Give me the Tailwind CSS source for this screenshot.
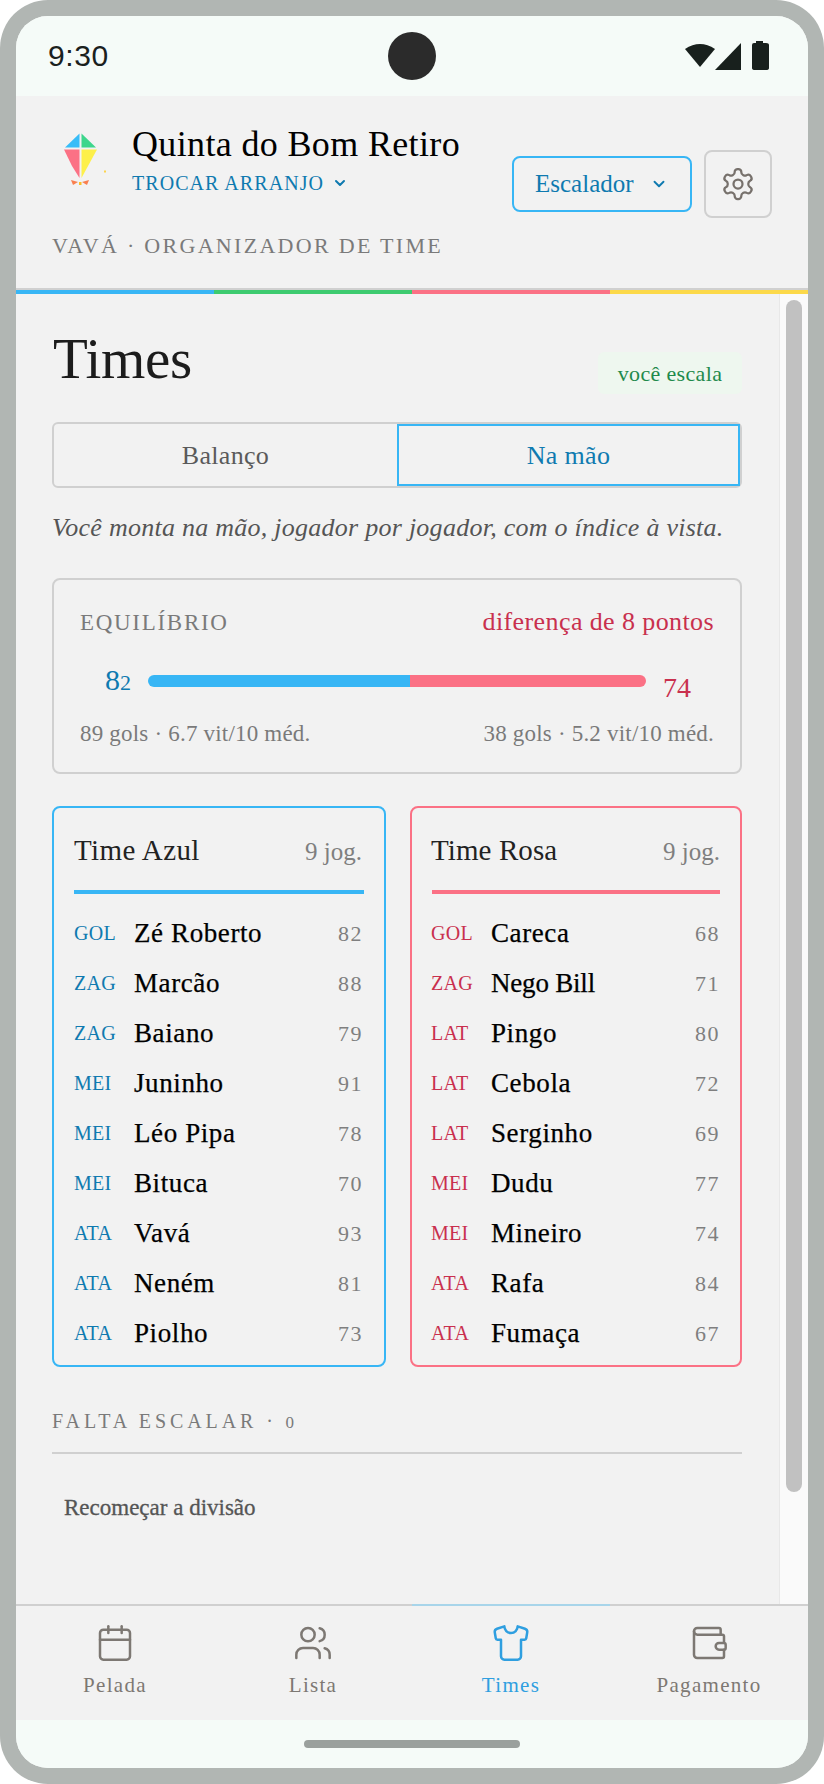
<!DOCTYPE html>
<html lang="pt">
<head>
  <meta charset="UTF-8" />
  <meta name="viewport" content="width=device-width, initial-scale=1.0" />
  <title>Times</title>
  <script src="https://cdn.jsdelivr.net/npm/@tailwindcss/browser@4"></script>
</head>
<body class="bg-white">
  <div class="w-[824px] h-[1784px] p-4 bg-[#b1b6b3] rounded-[48px] font-['Liberation_Serif',serif]">
    <div class="h-[1752px] flex flex-col overflow-hidden rounded-[32px] bg-[#f2f2f2]">

      <!-- Status bar -->
      <div class="h-20 shrink-0 bg-[#f5fbf8] flex items-center justify-between pl-8 pr-[39px] relative">
        <span class="font-['Liberation_Sans',sans-serif] text-[30px] leading-8 tracking-[0.6px] text-[#1a211e]">9:30</span>
        <div class="absolute left-[372px] top-4 w-12 h-12 rounded-full bg-[#2b2b2b]"></div>
        <svg class="w-[84px] h-[30px]" viewBox="0 0 84 30" fill="#18201d">
          <path d="M0 7 Q15 -3 30 7 L15 25 Z" transform="translate(0 1)" />
          <path d="M30 29 L56 2 V29 Z" />
          <path d="M67 4 Q67 2 69 2 H71 V0 H78 V2 H81 Q84 2 84 4 V27 Q84 29 81 29 H70 Q67 29 67 27 Z" />
        </svg>
      </div>

      <!-- Header -->
      <header class="h-[192px] shrink-0 pt-[27px] px-9">
        <div class="flex justify-between items-start">
          <div class="flex gap-4">
            <svg class="w-16 h-16 mt-[1px]" viewBox="0 0 64 64">
              <polygon points="27.5,9.5 27.5,23.5 13,23.5" fill="#38bdf8" />
              <polygon points="29.5,9.5 44,23.5 29.5,23.5" fill="#3dd68c" />
              <polygon points="12,25.5 27.5,25.5 27.5,54 20,42" fill="#fb7185" />
              <polygon points="29.5,25.5 45,25.5 29.5,54" fill="#fdf04a" />
              <polygon points="19,56 26,58 21,61" fill="#f97f4f" />
              <polygon points="37,56 30,58 35,61" fill="#f97f4f" />
              <rect x="27" y="58" width="2.5" height="3" fill="#fbbf24" />
              <rect x="52" y="46.5" width="2" height="2" fill="#fcd34d" />
            </svg>
            <div>
              <h1 class="text-[36px] leading-[42px] tracking-[0.35px] text-black">Quinta do Bom Retiro</h1>
              <button class="mt-[6px] flex items-center gap-2 text-[20px] leading-6 tracking-[1.05px] text-[#0f7ab0]">
                TROCAR ARRANJO
                <svg class="w-4 h-4" viewBox="0 0 24 24" fill="none" stroke="currentColor" stroke-width="3" stroke-linecap="round" stroke-linejoin="round"><path d="m6 9 6 6 6-6" /></svg>
              </button>
            </div>
          </div>
          <div class="mt-[27px] flex items-center gap-3">
            <button class="w-[180px] h-14 border-2 border-[#38b6f5] rounded-lg flex items-center pl-[21px] gap-[16px] text-[25px] text-[#0f7ab0]">
              Escalador
              <svg class="w-[18px] h-[18px]" viewBox="0 0 24 24" fill="none" stroke="currentColor" stroke-width="2.5" stroke-linecap="round" stroke-linejoin="round"><path d="m6 9 6 6 6-6" /></svg>
            </button>
            <button class="w-[68px] h-[68px] border-2 border-[#d0d0d0] rounded-lg flex items-center justify-center text-[#77716c]">
              <svg class="w-9 h-9" viewBox="0 0 24 24" fill="none" stroke="currentColor" stroke-width="1.5" stroke-linecap="round" stroke-linejoin="round"><path d="M12.22 2h-.44a2 2 0 0 0-2 2v.18a2 2 0 0 1-1 1.73l-.43.25a2 2 0 0 1-2 0l-.15-.08a2 2 0 0 0-2.73.73l-.22.38a2 2 0 0 0 .73 2.73l.15.1a2 2 0 0 1 1 1.72v.51a2 2 0 0 1-1 1.74l-.15.09a2 2 0 0 0-.73 2.73l.22.38a2 2 0 0 0 2.73.73l.15-.08a2 2 0 0 1 2 0l.43.25a2 2 0 0 1 1 1.73V20a2 2 0 0 0 2 2h.44a2 2 0 0 0 2-2v-.18a2 2 0 0 1 1-1.73l.43-.25a2 2 0 0 1 2 0l.15.08a2 2 0 0 0 2.73-.73l.22-.39a2 2 0 0 0-.73-2.73l-.15-.08a2 2 0 0 1-1-1.74v-.5a2 2 0 0 1 1-1.74l.15-.09a2 2 0 0 0 .73-2.73l-.22-.38a2 2 0 0 0-2.73-.73l-.15.08a2 2 0 0 1-2 0l-.43-.25a2 2 0 0 1-1-1.73V4a2 2 0 0 0-2-2z" /><circle cx="12" cy="12" r="3" /></svg>
            </button>
          </div>
        </div>
        <p class="mt-4 text-[22px] leading-6 tracking-[2.3px] text-[#7a7a7a]">VAVÁ · ORGANIZADOR DE TIME</p>
      </header>

      <!-- Color strip -->
      <div class="shrink-0 border-t-2 border-[#d0d0d0] grid grid-cols-4 h-[6px]">
        <div class="bg-[#38b6f5]"></div>
        <div class="bg-[#3ecb70]"></div>
        <div class="bg-[#fb7185]"></div>
        <div class="bg-[#fcd94a]"></div>
      </div>

      <!-- Content + scrollbar -->
      <div class="flex-1 flex min-h-0">
        <main class="w-[763px] pl-9 pr-[37px] pt-[33px]">
          <div class="h-[67px] flex justify-between items-end">
            <h2 class="self-start pl-[1px] text-[57px] leading-[64px] tracking-[-0.3px] text-[#1c1c1c]">Times</h2>
            <span class="w-[144px] h-[42px] rounded-md bg-[#eef7ef] flex items-center justify-center text-[22px] tracking-[0.35px] text-[#1f8a4c]">você escala</span>
          </div>

          <div class="mt-7 h-[66px] border-2 border-[#d0d0d0] rounded-md grid grid-cols-2 text-[26px] tracking-[0.3px]">
            <button class="text-[#5a5a5a]">Balanço</button>
            <button class="border-2 border-[#38b6f5] text-[#0f7ab0]">Na mão</button>
          </div>

          <p class="mt-6 text-[26px] leading-8 tracking-[0.26px] italic text-[#555555]">Você monta na mão, jogador por jogador, com o índice à vista.</p>

          <section class="mt-[34px] h-[196px] border-2 border-[#d0d0d0] rounded-lg px-[26px] pt-[28px]">
            <div class="flex justify-between items-baseline leading-7">
              <span class="text-[23px] tracking-[1.7px] text-[#7a7a7a]">EQUILÍBRIO</span>
              <span class="text-[26px] tracking-[0.4px] text-[#c9304e]">diferença de 8 pontos</span>
            </div>
            <div class="mt-6 h-10 flex items-center text-[28px] leading-10">
              <span class="w-[68px] pr-[17px] text-right text-[30px] text-[#0f7ab0]">8<span class="text-[22px]">2</span></span>
              <div class="w-[498px] h-3 rounded-full overflow-hidden flex">
                <div class="w-[262px] bg-[#38b6f5]"></div>
                <div class="flex-1 bg-[#fb7185]"></div>
              </div>
              <span class="mt-[14px] pl-[17px] text-[#c9304e]">74</span>
            </div>
            <div class="mt-[19px] flex justify-between text-[23px] leading-7 tracking-[0.2px] text-[#7a7a7a]">
              <span>89 gols · 6.7 vit/10 méd.</span>
              <span>38 gols · 5.2 vit/10 méd.</span>
            </div>
          </section>

          <div class="mt-8 grid grid-cols-[334px_332px] gap-6">
            <section class="h-[561px] border-2 border-[#38b6f5] rounded-lg px-5 pt-6">
              <div class="flex justify-between items-baseline pr-[2px] leading-9">
                <h3 class="text-[29px] tracking-[0.4px] text-[#222222]">Time Azul</h3>
                <span class="text-[25px] text-[#7f7f7f]">9 jog.</span>
              </div>
              <div class="mt-5 h-1 bg-[#38b6f5]"></div>
              <ul class="mt-[14px] text-[27px] tracking-[0.6px] text-black">
                <li class="h-[50px] flex items-center pr-[1px]"><span class="w-[60px] text-[20px] tracking-[0.3px] text-[#0f7ab0]">GOL</span><span class="flex-1 [-webkit-text-stroke:0.25px_black]">Zé Roberto</span><span class="text-[22px] tracking-[1.5px] text-[#7f7f7f]">82</span></li>
                <li class="h-[50px] flex items-center pr-[1px]"><span class="w-[60px] text-[20px] tracking-[0.3px] text-[#0f7ab0]">ZAG</span><span class="flex-1 [-webkit-text-stroke:0.25px_black]">Marcão</span><span class="text-[22px] tracking-[1.5px] text-[#7f7f7f]">88</span></li>
                <li class="h-[50px] flex items-center pr-[1px]"><span class="w-[60px] text-[20px] tracking-[0.3px] text-[#0f7ab0]">ZAG</span><span class="flex-1 [-webkit-text-stroke:0.25px_black]">Baiano</span><span class="text-[22px] tracking-[1.5px] text-[#7f7f7f]">79</span></li>
                <li class="h-[50px] flex items-center pr-[1px]"><span class="w-[60px] text-[20px] tracking-[0.3px] text-[#0f7ab0]">MEI</span><span class="flex-1 [-webkit-text-stroke:0.25px_black]">Juninho</span><span class="text-[22px] tracking-[1.5px] text-[#7f7f7f]">91</span></li>
                <li class="h-[50px] flex items-center pr-[1px]"><span class="w-[60px] text-[20px] tracking-[0.3px] text-[#0f7ab0]">MEI</span><span class="flex-1 [-webkit-text-stroke:0.25px_black]">Léo Pipa</span><span class="text-[22px] tracking-[1.5px] text-[#7f7f7f]">78</span></li>
                <li class="h-[50px] flex items-center pr-[1px]"><span class="w-[60px] text-[20px] tracking-[0.3px] text-[#0f7ab0]">MEI</span><span class="flex-1 [-webkit-text-stroke:0.25px_black]">Bituca</span><span class="text-[22px] tracking-[1.5px] text-[#7f7f7f]">70</span></li>
                <li class="h-[50px] flex items-center pr-[1px]"><span class="w-[60px] text-[20px] tracking-[0.3px] text-[#0f7ab0]">ATA</span><span class="flex-1 [-webkit-text-stroke:0.25px_black]">Vavá</span><span class="text-[22px] tracking-[1.5px] text-[#7f7f7f]">93</span></li>
                <li class="h-[50px] flex items-center pr-[1px]"><span class="w-[60px] text-[20px] tracking-[0.3px] text-[#0f7ab0]">ATA</span><span class="flex-1 [-webkit-text-stroke:0.25px_black]">Neném</span><span class="text-[22px] tracking-[1.5px] text-[#7f7f7f]">81</span></li>
                <li class="h-[50px] flex items-center pr-[1px]"><span class="w-[60px] text-[20px] tracking-[0.3px] text-[#0f7ab0]">ATA</span><span class="flex-1 [-webkit-text-stroke:0.25px_black]">Piolho</span><span class="text-[22px] tracking-[1.5px] text-[#7f7f7f]">73</span></li>
              </ul>
            </section>
            <section class="h-[561px] border-2 border-[#fb7185] rounded-lg px-5 pt-6">
              <div class="-ml-px flex justify-between items-baseline leading-9">
                <h3 class="text-[29px] tracking-[0.1px] text-[#222222]">Time Rosa</h3>
                <span class="text-[25px] text-[#7f7f7f]">9 jog.</span>
              </div>
              <div class="mt-5 h-1 bg-[#fb7185]"></div>
              <ul class="-ml-px mt-[14px] text-[27px] tracking-[0.6px] text-black">
                <li class="h-[50px] flex items-center"><span class="w-[60px] text-[20px] tracking-[0.3px] text-[#c9304e]">GOL</span><span class="flex-1 [-webkit-text-stroke:0.25px_black]">Careca</span><span class="text-[22px] tracking-[1.5px] text-[#7f7f7f]">68</span></li>
                <li class="h-[50px] flex items-center"><span class="w-[60px] text-[20px] tracking-[0.3px] text-[#c9304e]">ZAG</span><span class="flex-1 tracking-[-0.2px] [-webkit-text-stroke:0.25px_black]">Nego Bill</span><span class="text-[22px] tracking-[1.5px] text-[#7f7f7f]">71</span></li>
                <li class="h-[50px] flex items-center"><span class="w-[60px] text-[20px] tracking-[0.3px] text-[#c9304e]">LAT</span><span class="flex-1 [-webkit-text-stroke:0.25px_black]">Pingo</span><span class="text-[22px] tracking-[1.5px] text-[#7f7f7f]">80</span></li>
                <li class="h-[50px] flex items-center"><span class="w-[60px] text-[20px] tracking-[0.3px] text-[#c9304e]">LAT</span><span class="flex-1 [-webkit-text-stroke:0.25px_black]">Cebola</span><span class="text-[22px] tracking-[1.5px] text-[#7f7f7f]">72</span></li>
                <li class="h-[50px] flex items-center"><span class="w-[60px] text-[20px] tracking-[0.3px] text-[#c9304e]">LAT</span><span class="flex-1 [-webkit-text-stroke:0.25px_black]">Serginho</span><span class="text-[22px] tracking-[1.5px] text-[#7f7f7f]">69</span></li>
                <li class="h-[50px] flex items-center"><span class="w-[60px] text-[20px] tracking-[0.3px] text-[#c9304e]">MEI</span><span class="flex-1 [-webkit-text-stroke:0.25px_black]">Dudu</span><span class="text-[22px] tracking-[1.5px] text-[#7f7f7f]">77</span></li>
                <li class="h-[50px] flex items-center"><span class="w-[60px] text-[20px] tracking-[0.3px] text-[#c9304e]">MEI</span><span class="flex-1 [-webkit-text-stroke:0.25px_black]">Mineiro</span><span class="text-[22px] tracking-[1.5px] text-[#7f7f7f]">74</span></li>
                <li class="h-[50px] flex items-center"><span class="w-[60px] text-[20px] tracking-[0.3px] text-[#c9304e]">ATA</span><span class="flex-1 [-webkit-text-stroke:0.25px_black]">Rafa</span><span class="text-[22px] tracking-[1.5px] text-[#7f7f7f]">84</span></li>
                <li class="h-[50px] flex items-center"><span class="w-[60px] text-[20px] tracking-[0.3px] text-[#c9304e]">ATA</span><span class="flex-1 [-webkit-text-stroke:0.25px_black]">Fumaça</span><span class="text-[22px] tracking-[1.5px] text-[#7f7f7f]">67</span></li>
              </ul>
            </section>
          </div>

          <p class="mt-[42px] pb-[17px] border-b-2 border-[#d0d0d0] text-[20px] leading-6 tracking-[3.9px] text-[#7a7a7a]">FALTA ESCALAR · <span class="text-[17px]">0</span></p>
          <button class="mt-10 pl-3 text-[23px] leading-7 text-[#555555] [-webkit-text-stroke:0.3px_#555555]">Recomeçar a divisão</button>
        </main>

        <!-- Scrollbar -->
        <div class="flex-1 border-l border-[#e8e8e8] bg-[#fafafa] pl-[6px] pt-[6px]">
          <div class="w-4 h-[1192px] rounded-full bg-[#c1c1c1]"></div>
        </div>
      </div>

      <!-- Tab bar -->
      <nav class="h-[116px] shrink-0 border-t-2 border-[#d0d0d0] grid grid-cols-4 text-center text-[21px] leading-6 tracking-[1.3px] text-[#7d7873]">
        <a class="flex flex-col items-center pt-[17px]">
          <svg class="w-10 h-10" viewBox="0 0 24 24" fill="none" stroke="currentColor" stroke-width="1.5" stroke-linecap="round" stroke-linejoin="round"><path d="M8 2v4" /><path d="M16 2v4" /><rect width="18" height="18" x="3" y="4" rx="2" /><path d="M3 10h18" /></svg>
          <span class="mt-[10px]">Pelada</span>
        </a>
        <a class="flex flex-col items-center pt-[17px]">
          <svg class="w-10 h-10" viewBox="0 0 24 24" fill="none" stroke="currentColor" stroke-width="1.5" stroke-linecap="round" stroke-linejoin="round"><path d="M16 21v-2a4 4 0 0 0-4-4H6a4 4 0 0 0-4 4v2" /><circle cx="9" cy="7" r="4" /><path d="M22 21v-2a4 4 0 0 0-3-3.87" /><path d="M16 3.13a4 4 0 0 1 0 7.75" /></svg>
          <span class="mt-[10px]">Lista</span>
        </a>
        <a class="-mt-[2px] border-t-2 border-[#a8d5ea] flex flex-col items-center pt-[17px] text-[#2f9fe0]">
          <svg class="w-10 h-10" viewBox="0 0 24 24" fill="none" stroke="currentColor" stroke-width="1.5" stroke-linecap="round" stroke-linejoin="round"><path d="M20.38 3.46 16 2a4 4 0 0 1-8 0L3.62 3.46a2 2 0 0 0-1.34 2.23l.58 3.47a1 1 0 0 0 .99.84H6v10c0 1.1.9 2 2 2h8a2 2 0 0 0 2-2V10h2.15a1 1 0 0 0 .99-.84l.58-3.47a2 2 0 0 0-1.34-2.23z" /></svg>
          <span class="mt-[10px]">Times</span>
        </a>
        <a class="flex flex-col items-center pt-[17px]">
          <svg class="w-10 h-10" viewBox="0 0 24 24" fill="none" stroke="currentColor" stroke-width="1.5" stroke-linecap="round" stroke-linejoin="round"><path d="M19 7V4a1 1 0 0 0-1-1H5a2 2 0 0 0 0 4h15a1 1 0 0 1 1 1v4h-3a2 2 0 0 0 0 4h3a1 1 0 0 0 1-1v-2a1 1 0 0 0-1-1" /><path d="M3 5v14a2 2 0 0 0 2 2h15a1 1 0 0 0 1-1v-4" /></svg>
          <span class="mt-[10px]">Pagamento</span>
        </a>
      </nav>

      <!-- Gesture bar -->
      <div class="h-12 shrink-0 bg-[#f5fbf8] pt-5">
        <div class="mx-auto w-[216px] h-2 rounded-full bg-[#9aa09d]"></div>
      </div>
    </div>
  </div>
</body>
</html>
